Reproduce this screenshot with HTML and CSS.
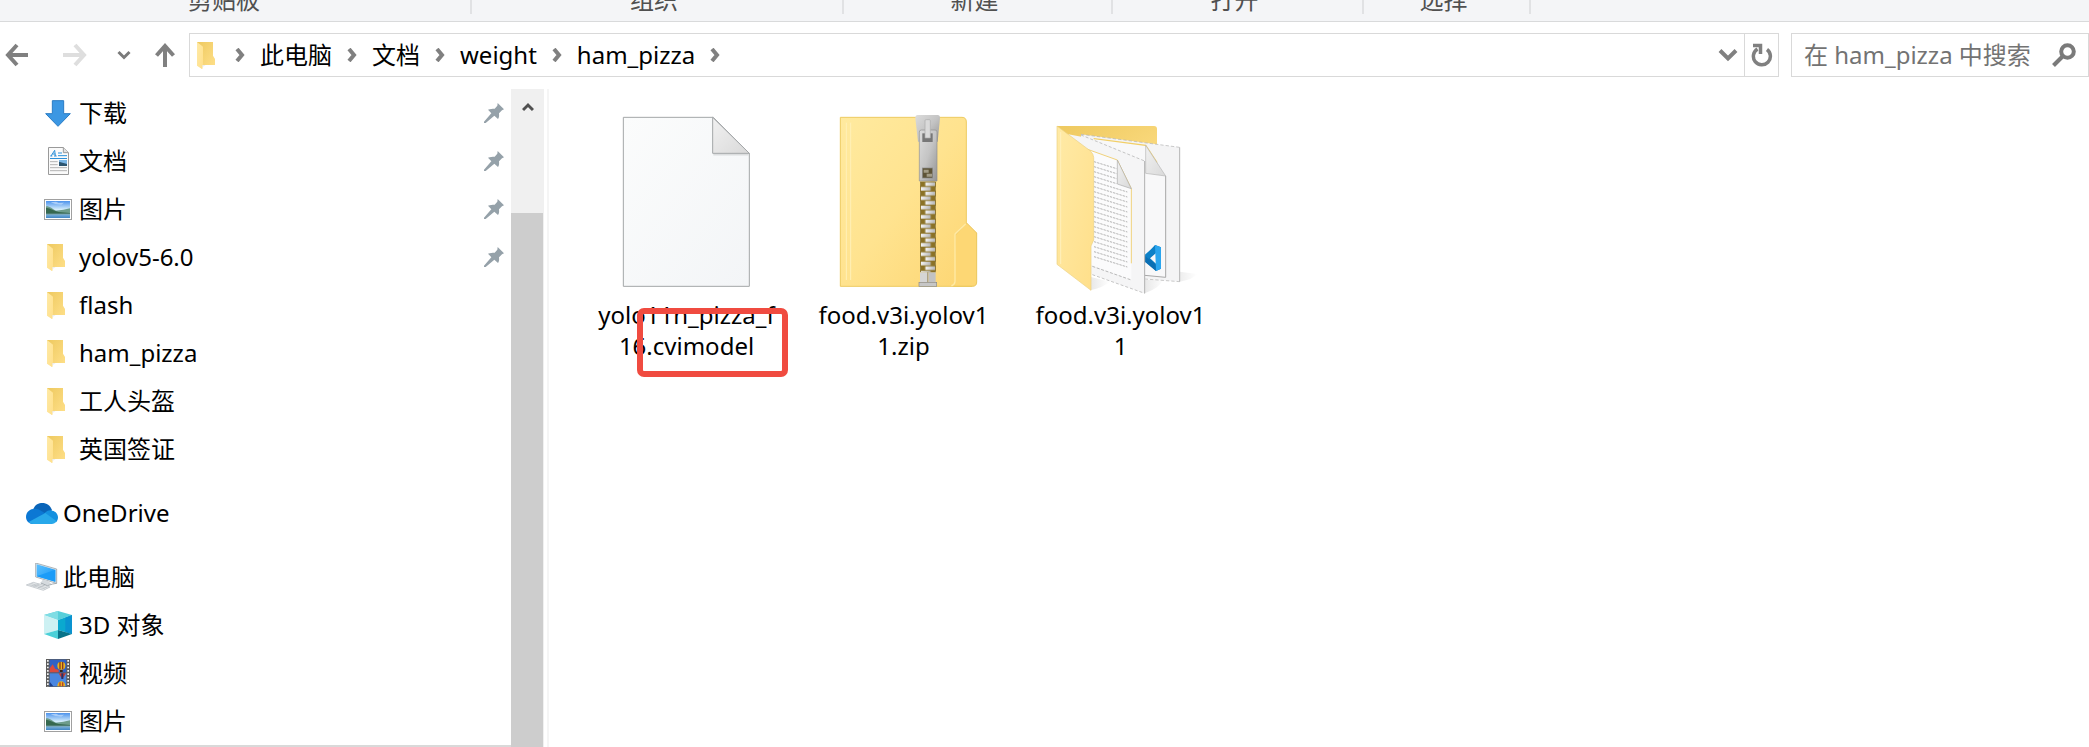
FILE: index.html
```html
<!DOCTYPE html>
<html lang="zh-CN">
<head>
<meta charset="utf-8">
<title>ham_pizza</title>
<link rel="stylesheet" href="styles.css">
</head>
<body>
<svg class="defs" aria-hidden="true">
  <defs>
    <linearGradient id="gFold" x1="0" y1="0" x2="1" y2="1"><stop offset="0" stop-color="#eec95f"/><stop offset="1" stop-color="#ffe08a"/></linearGradient>
    <linearGradient id="gFlap" x1="0" y1="0" x2="1" y2="1"><stop offset="0" stop-color="#ffeaa6"/><stop offset="1" stop-color="#ffdf8a"/></linearGradient>
    <linearGradient id="gSky" x1="0" y1="0" x2="0" y2="1"><stop offset="0" stop-color="#4d93ec"/><stop offset=".5" stop-color="#d3ecfb"/><stop offset="1" stop-color="#3f86c4"/></linearGradient>
    <linearGradient id="gZip" x1="0" y1="0" x2="1" y2="1"><stop offset="0" stop-color="#ffea9f"/><stop offset=".5" stop-color="#ffe38f"/><stop offset="1" stop-color="#fdd673"/></linearGradient>
    <linearGradient id="gMetal" x1="0" y1="0" x2="1" y2="1"><stop offset="0" stop-color="#dcdcdc"/><stop offset=".5" stop-color="#c4c4c4"/><stop offset="1" stop-color="#949494"/></linearGradient>
    <linearGradient id="gTooth" x1="0" y1="0" x2="1" y2="0"><stop offset="0" stop-color="#f6f6f6"/><stop offset="1" stop-color="#b5b5b5"/></linearGradient>
    <linearGradient id="gPaper" x1="0" y1="0" x2="1" y2="1"><stop offset="0" stop-color="#fbfcfc"/><stop offset="1" stop-color="#f3f5f7"/></linearGradient>
    <linearGradient id="gCurl" x1="0" y1="0" x2="1" y2="1"><stop offset="0" stop-color="#f1f1f1"/><stop offset="1" stop-color="#d9d9d9"/></linearGradient>
    <linearGradient id="gShade" x1="0" y1="0" x2="1" y2="0"><stop offset="0" stop-color="#c4c4c4"/><stop offset="1" stop-color="#ffffff"/></linearGradient>
    <linearGradient id="gScreen" x1="0" y1="0" x2="1" y2="1"><stop offset="0" stop-color="#5cc0ff"/><stop offset="1" stop-color="#1296f5"/></linearGradient>
    <pattern id="pTeeth" x="362" y="245" width="44" height="28" patternUnits="userSpaceOnUse">
      <rect width="44" height="28" fill="#8b7226"/>
      <rect x="14" y="2" width="30" height="11" fill="url(#gTooth)"/>
      <rect x="0" y="16" width="30" height="11" fill="url(#gTooth)"/>
    </pattern>
    <symbol id="folder" viewBox="0 0 57 81">
      <path d="M0 0H48V41L54 51V69H16V81L0 69Z" fill="url(#gFold)"/>
      <path d="M0 0 18 14V66L15 81 0 71Z" fill="url(#gFlap)"/>
      <path d="M16 75 26 70 16 70Z" fill="#e9e9e9"/>
    </symbol>
    <symbol id="pin" viewBox="0 0 60 60">
      <path d="M41 0 60 19 54 22 45 31C46 40 45 44 42 48L31 38 5 60H0V56L22 31 12 20C19 17 25 17 32 17L40 8Z" fill="#95a1a9"/>
    </symbol>
    <symbol id="chev" viewBox="0 0 10 14"><path d="M2 1 7 7 2 13" fill="none" stroke="#808080" stroke-width="4"/></symbol>
    <symbol id="picture" viewBox="0 0 84 63">
      <rect x="1.500" y="1.500" width="81" height="60" fill="#fff" stroke="#a0a0a0" stroke-width="3"/>
      <rect x="6" y="6" width="72" height="51" fill="url(#gSky)"/>
      <path d="M6 22C20 22 24 30 36 35L58 32 78 28V44H6Z" fill="#6d9c8b"/>
      <path d="M6 26C20 28 30 36 44 39L78 42V45L6 46Z" fill="#36684f"/>
      <path d="M20 10 36 8 44 12 60 11 52 17 34 15Z" fill="#a9cdf8"/>
      <path d="M6 44H78V47H6Z" fill="#7da8b6"/>
    </symbol>
  </defs>
</svg>

<header class="ribbon">
  <div class="group group-clip">剪贴板</div>
  <div class="group group-org">组织</div>
  <div class="group group-new">新建</div>
  <div class="group group-open">打开</div>
  <div class="group group-sel">选择</div>
</header>

<div class="toolbar">
  <div class="history">
    <button type="button" aria-label="返回"><svg width="24" height="26" viewBox="0 0 24 26"><path d="M23 13H4M12 3 3 13 12 23" fill="none" stroke="#808080" stroke-width="4"/></svg></button>
    <button type="button" aria-label="前进" disabled><svg width="24" height="26" viewBox="0 0 24 26"><path d="M0 13H20M12 3 21 13 12 23" fill="none" stroke="#dedede" stroke-width="4"/></svg></button>
    <button type="button" aria-label="最近浏览的位置"><svg width="14" height="10" viewBox="0 0 14 10"><path d="M1.500 2 7 7.500 12.500 2" fill="none" stroke="#7a7a7a" stroke-width="3"/></svg></button>
    <button type="button" aria-label="上移"><svg width="20" height="24" viewBox="0 0 20 24"><path d="M10 24V4M1.500 12.500 10 3 18.500 12.500" fill="none" stroke="#808080" stroke-width="4"/></svg></button>
  </div>
  <div class="address">
    <nav class="crumbs" aria-label="地址">
      <svg class="crumb-folder" width="19" height="27"><use href="#folder"/></svg>
      <svg width="10" height="14"><use href="#chev"/></svg>
      <a href="#pc">此电脑</a>
      <svg width="10" height="14"><use href="#chev"/></svg>
      <a href="#docs">文档</a>
      <svg width="10" height="14"><use href="#chev"/></svg>
      <a href="#weight">weight</a>
      <svg width="10" height="14"><use href="#chev"/></svg>
      <a href="#ham">ham_pizza</a>
      <svg width="10" height="14"><use href="#chev"/></svg>
    </nav>
    <button type="button" class="drop" aria-label="以前的位置"><svg width="20" height="14" viewBox="0 0 20 14"><path d="M2 2.500 10 10.500 18 2.500" fill="none" stroke="#808080" stroke-width="4"/></svg></button>
    <button type="button" class="refresh" aria-label="刷新"><svg width="22" height="24" viewBox="0 0 22 24"><path d="M16 6.500A8.500 8.500 0 1 1 6.500 6" fill="none" stroke="#808080" stroke-width="3.500"/><path d="M2 2.500H9.500V11" fill="none" stroke="#808080" stroke-width="3.500"/></svg></button>
  </div>
  <form class="search">
    <input type="text" aria-label="搜索" placeholder="在 ham_pizza 中搜索">
    <button type="button" aria-label="开始搜索"><svg width="24" height="24" viewBox="0 0 24 24"><circle cx="15.500" cy="8.500" r="6.300" fill="none" stroke="#7a7a7a" stroke-width="4"/><path d="M11 13 1.500 22.500" stroke="#7a7a7a" stroke-width="4"/></svg></button>
  </form>
</div>

<main class="content">
  <nav class="tree" aria-label="导航窗格">
    <a href="#1" class="item"><span class="ico"><svg width="26" height="27" viewBox="0 0 78 81"><path d="M22 2H56V41H76L39 79 2 41H22Z" fill="#3b97e3" stroke="#2a7cc4" stroke-width="3"/></svg></span><span class="label">下载</span><svg class="pin" width="20" height="20"><use href="#pin"/></svg></a>
    <a href="#2" class="item"><span class="ico"><svg width="21" height="28" viewBox="0 0 63 84"><path d="M1.500 1.500H46L61.500 17V82.500H1.500Z" fill="#fafafa" stroke="#9a9a9a" stroke-width="3"/><path d="M46 1.500V17H61" fill="#e2e2e2" stroke="#9a9a9a" stroke-width="3"/><path d="M9 27 20 10 22 27M13 21H22M7 27H13M18 27H26M30 18H42M30 26H57" fill="none" stroke="#2b90d9" stroke-width="3"/><path d="M6 34.500H57" stroke="#2b90d9" stroke-width="3"/><path d="M6 44H29M6 53H29M6 62H57M6 71H57" stroke="#b4b4b4" stroke-width="3"/><rect x="33" y="39" width="24" height="18" fill="#7ab6e6"/><path d="M33 44 57 51V57H33Z" fill="#2c5570"/></svg></span><span class="label">文档</span><svg class="pin" width="20" height="20"><use href="#pin"/></svg></a>
    <a href="#3" class="item"><span class="ico"><svg width="28" height="21"><use href="#picture"/></svg></span><span class="label">图片</span><svg class="pin" width="20" height="20"><use href="#pin"/></svg></a>
    <a href="#4" class="item"><span class="ico ico-folder"><svg width="19" height="27"><use href="#folder"/></svg></span><span class="label">yolov5-6.0</span><svg class="pin" width="20" height="20"><use href="#pin"/></svg></a>
    <a href="#5" class="item"><span class="ico ico-folder"><svg width="19" height="27"><use href="#folder"/></svg></span><span class="label">flash</span></a>
    <a href="#6" class="item"><span class="ico ico-folder"><svg width="19" height="27"><use href="#folder"/></svg></span><span class="label">ham_pizza</span></a>
    <a href="#7" class="item"><span class="ico ico-folder"><svg width="19" height="27"><use href="#folder"/></svg></span><span class="label">工人头盔</span></a>
    <a href="#8" class="item"><span class="ico ico-folder"><svg width="19" height="27"><use href="#folder"/></svg></span><span class="label">英国签证</span></a>
    <a href="#9" class="item root"><span class="ico"><svg width="32" height="21" viewBox="0 0 96 63"><path d="M22 18C28 4 38 0 49 0C62 0 74 8 78 22L52 42Z" fill="#0a64b8"/><path d="M19 63C8 62 0 53 0 42C0 26 13 17 26 17C36 17 42 21 58 31L40 56Z" fill="#0c78d4"/><path d="M56 30C66 20 74 21 79 23C90 25 96 34 96 43C96 49 94 54 90 58L50 48Z" fill="#1490df"/><path d="M8 57 58 30 92 55C88 60 83 63 77 63H21C16 63 11 61 8 57Z" fill="#28a8ea"/></svg></span><span class="label">OneDrive</span></a>
    <a href="#10" class="item root"><span class="ico"><svg width="32" height="28" viewBox="0 0 96 84"><path d="M29 0 92 18V61L29 42Z" fill="#e6eaed" stroke="#8a949b" stroke-width="2"/><path d="M32 4 88 20V56L32 40Z" fill="url(#gScreen)"/><path d="M32 40 88 20V56Z" fill="#1b9cf8"/><path d="M50 50 66 54 76 62 64 68 44 60Z" fill="#d5dade"/><path d="M44 60 64 68 80 63 92 61" fill="none" stroke="#a3abb0" stroke-width="3"/><path d="M1 66 22 58 72 72 52 82Z" fill="#e9eced" stroke="#b3babf" stroke-width="2"/><path d="M10 65 58 78M16 62 64 75M22 70 40 63M36 74 54 67" stroke="#b3babf" stroke-width="2"/></svg></span><span class="label">此电脑</span></a>
    <a href="#11" class="item"><span class="ico"><svg width="28" height="28" viewBox="0 0 84 84"><path d="M0 12 42 0 84 12 42 27Z" fill="#57cfda"/><path d="M0 12 42 0V27Z" fill="#7fdde4"/><path d="M0 12 42 27V57L0 69Z" fill="#cdf1f3"/><path d="M84 12 42 27V57L84 69Z" fill="#0aa9cf"/><path d="M84 12 64 20V63L84 69Z" fill="#0a93d0"/><path d="M0 69 42 57V84Z" fill="#4bd0d8"/><path d="M84 69 42 57V84Z" fill="#087389"/></svg></span><span class="label">3D 对象</span></a>
    <a href="#12" class="item"><span class="ico"><svg width="24" height="28" viewBox="0 0 72 84"><rect width="72" height="84" fill="#5c5c5c"/><rect x="11" y="2" width="50" height="38" fill="#2f62c6"/><rect x="11" y="43" width="50" height="39" fill="#4a86e0"/><path d="M5.500 3V84M66.500 3V84" stroke="#f4f4f4" stroke-width="5" stroke-dasharray="5 5"/><path d="M11 28 20 16 28 30 38 32V40H11Z" fill="#d94b3f"/><ellipse cx="46" cy="20" rx="12" ry="12" fill="#e8b320"/><path d="M42 9V31M50 9V31" stroke="#8d3a1a" stroke-width="4"/><path d="M42 33H50V39H42Z" fill="#3b2412"/><path d="M38 43H60L52 56H46Z" fill="#c63b2e"/><path d="M46 43H52V60H46Z" fill="#26316b"/><path d="M34 82C34 62 58 62 58 82Z" fill="#e8b320"/><path d="M42 70V82M50 70V82" stroke="#b8402a" stroke-width="4"/><path d="M11 68 22 82H11Z" fill="#1c3f8c"/></svg></span><span class="label">视频</span></a>
    <a href="#13" class="item"><span class="ico"><svg width="28" height="21"><use href="#picture"/></svg></span><span class="label">图片</span></a>
  </nav>
  <div class="scroll">
    <button type="button" aria-label="向上滚动"><svg width="12" height="10" viewBox="0 0 12 10"><path d="M1 8 6 3 11 8" fill="none" stroke="#505050" stroke-width="3"/></svg></button>
    <div class="thumb"></div>
  </div>
  <section class="files">
    <figure class="file">
      <svg width="217" height="199" viewBox="-6 0 651 597">
        <path d="M130 52H400L508 160V559H130Z" fill="url(#gPaper)" stroke="#a3a6a8" stroke-width="3"/>
        <path d="M400 164H506" stroke="#dcdedf" stroke-width="5"/>
        <path d="M398 52V160H508Z" fill="url(#gCurl)" stroke="#a3a6a8" stroke-width="3"/>
      </svg>
      <figcaption>yolo11n_pizza_f16.cvimodel</figcaption>
      <span class="mark"></span>
    </figure>
    <figure class="file">
      <svg width="217" height="199" viewBox="-15 0 651 597">
        <path d="M466 405 500 369 530 399V546Q530 559 517 559H460Z" fill="#fdd774" stroke="#eac65c" stroke-width="3"/>
        <path d="M121 52H486Q499 52 499 66V370L466 400V545Q466 559 452 559H121Z" fill="url(#gZip)"/>
        <path d="M499 369V66Q499 52 486 52H121V559H517" fill="none" stroke="#edcb61" stroke-width="3"/>
        <path d="M139 68V540M152 68V540" stroke="#fff0b8" stroke-width="3"/>
        <path d="M497 372 465 402V545Q464 555 454 557" fill="none" stroke="#ffeaa5" stroke-width="4"/>
        <rect x="360" y="245" width="48" height="272" fill="#8b7226"/>
        <rect x="362" y="245" width="44" height="272" fill="url(#pTeeth)"/>
        <path d="M353 45H413Q420 45 420 54L413 125H354L346 54Q346 45 353 45Z" fill="url(#gMetal)"/>
        <path d="M358 96Q358 90 364 90H405Q411 90 411 96V243H358Z" fill="url(#gMetal)" stroke="#8f8f8f" stroke-width="2"/>
        <rect x="367" y="100" width="31" height="26" fill="#777"/>
        <path d="M375 62Q375 59 379 59H388Q391 59 391 62V114H375Z" fill="#dadada" stroke="#aaa" stroke-width="2"/>
        <rect x="367" y="204" width="31" height="30" fill="#5e5437" stroke="#8a8a8a" stroke-width="2"/>
        <path d="M371 209H386V218H371ZM380 221H396V230H380Z" fill="#a39c86"/>
        <rect x="360" y="517" width="22" height="30" fill="#d5d5d5"/><rect x="385" y="517" width="22" height="30" fill="#c2c2c2"/>
        <path d="M383 517V547" stroke="#777" stroke-width="2"/>
        <rect x="357" y="547" width="53" height="12" fill="#c6c6c6" stroke="#8a8a8a" stroke-width="2"/>
      </svg>
      <figcaption>food.v3i.yolov11.zip</figcaption>
    </figure>
    <figure class="file">
      <svg width="217" height="199" viewBox="-24 0 651 597">
        <path d="M479 545V515L532 522Q520 538 479 545Z" fill="url(#gShade)" opacity=".3"/>
        <path d="M374 580V540L432 535Q420 565 374 580Z" fill="url(#gShade)" opacity=".4"/>
        <path d="M210 571V530L270 545Q250 562 210 571Z" fill="url(#gShade)" opacity=".4"/>
        <path d="M111 78H402Q411 78 411 87V250H111Z" fill="url(#gFold)"/>
        <path d="M183 103 479 142V545L183 520Z" fill="#f4f4f5"/>
        <path d="M479 142V545" stroke="#b5b5b5" stroke-width="3"/>
        <path d="M183 103 479 142M374 537 479 545" fill="none" stroke="#b0b0b0" stroke-width="2" stroke-dasharray="10 6"/>
        <path d="M223 116 377 136 437 228V532L223 510Z" fill="#f8f8f9"/>
        <path d="M437 228V532L374 526" fill="none" stroke="#a8a8a8" stroke-width="3"/>
        <path d="M223 130V116L377 136 411 188" fill="none" stroke="#f2cf67" stroke-width="4"/>
        <path d="M377 136V220L437 228Z" fill="url(#gCurl)" stroke="#b5b5b5" stroke-width="2"/>
        <path d="M405 435 423 442V506L408 513 368 478 374 470Z" fill="#0a78be"/><path d="M374 488 408 456V435L368 470Z" fill="#0d81c8"/><path d="M368 462 408 495V513L368 480Z" fill="#0a6fb4"/><path d="M408 459V491L390 475Z" fill="#f8f8f9"/><path d="M405 435 423 442V506L408 513Z" fill="#2aa5ee"/>
        <path d="M145 103 223 118 374 183V580L217 524 145 480Z" fill="#f5f5f6"/>
        <path d="M374 183V580" stroke="#b0b0b0" stroke-width="3"/>
        <path d="M183 105 374 183M217 524 374 580" stroke="#aaa" stroke-width="2" stroke-dasharray="9 6"/>
        <path d="M200 147 292 180 334 266V540L200 490Z" fill="#fbfbfc"/>
        <path d="M200 147 292 180 334 266V490" fill="none" stroke="#f0d27c" stroke-width="3"/>
        <path d="M217 499 334 540" stroke="#999" stroke-width="2" stroke-dasharray="9 5"/>
        <path d="M292 180V252L334 266Z" fill="url(#gCurl)" stroke="#aaa" stroke-width="2"/>
        <path d="M222 185 290 206M222 200 290 221M222 215 290 236M222 230 290 251M222 245 322 276M222 260 322 291M222 275 322 306M222 290 322 321M222 305 322 336M222 320 322 351M222 335 322 366M222 350 322 381M222 365 322 396M222 380 322 411M222 395 322 426M222 410 322 441M222 425 322 456M222 440 322 471M222 455 322 486M222 470 322 501" stroke="#b4b4b4" stroke-width="3" stroke-dasharray="7 3"/>
        <path d="M111 78 210 152Q221 162 221 172V420L213 438V571L111 493Z" fill="url(#gFlap)" stroke="#ecd081" stroke-width="2"/>
        <path d="M122 96V492" stroke="#fff0bd" stroke-width="3"/>
      </svg>
      <figcaption>food.v3i.yolov11</figcaption>
    </figure>
  </section>
</main>
</body>
</html>
```
FILE: styles.css
```css
* { box-sizing: border-box; }

body {
  margin: 0;
  height: 100vh;
  display: flex;
  flex-direction: column;
  overflow: hidden;
  background: #fff;
  color: #000;
  font: 24px/32px "Noto Sans", "Noto Sans CJK SC", sans-serif;
}

svg { display: block; flex: none; }
a { color: inherit; text-decoration: none; }

button {
  display: flex;
  align-items: center;
  justify-content: center;
  padding: 0;
  border: 0;
  background: none;
}

.defs { position: absolute; width: 0; height: 0; }

/* Ribbon footer */
.ribbon {
  display: flex;
  flex: none;
  height: 22px;
  background: #f4f5f7;
  border-bottom: 1px solid #d9dadb;
  overflow: hidden;
}

.group {
  display: flex;
  align-items: flex-end;
  justify-content: center;
  height: 14px;
  padding-right: 6px;
  border-right: 2px solid #e1e2e4;
  color: #505050;
  line-height: 28px;
}

.group-clip { width: 472px; padding-right: 22px; }
.group-org { width: 372px; }
.group-new { width: 269px; }
.group-open { width: 251px; }
.group-sel { width: 167px; }

/* Address row */
.toolbar {
  display: flex;
  flex: none;
  align-items: center;
  padding: 11px 0 12px;
}

.history {
  display: flex;
  align-items: center;
  width: 189px;
  padding-left: 5px;
}

.history button { margin-right: 30px; }
.history button:first-child { margin-right: 34px; }
.history button:nth-child(3) { margin-right: 24px; }
.history button:last-child { margin-right: 0; }

.address {
  display: flex;
  flex: 1;
  height: 44px;
  margin-right: 12px;
  border: 1px solid #d9d9d9;
}

.crumbs {
  display: flex;
  flex: 1;
  align-items: center;
  gap: 15px;
  padding-left: 7px;
}

.crumb-folder { margin-right: 4px; }
.drop { width: 32px; }
.refresh { width: 34px; border-left: 1px solid #d9d9d9; }

.search {
  display: flex;
  width: 298px;
  height: 44px;
  padding: 0 12px;
  border: 1px solid #d9d9d9;
}

.search input {
  flex: 1;
  min-width: 0;
  padding: 0;
  border: 0;
  outline: 0;
  background: none;
  font: inherit;
}

.search input::placeholder { color: #737373; opacity: 1; }

/* Panes */
.content {
  display: flex;
  flex: 1;
  min-height: 0;
}

.tree {
  width: 511px;
  border-bottom: 2px solid #d9d9d9;
  overflow: hidden;
}

.item {
  display: flex;
  align-items: center;
  height: 48px;
  padding: 0 7px 0 44px;
}

.item.root { margin-top: 16px; padding-left: 26px; }
.ico { display: flex; justify-content: center; width: 28px; margin-right: 7px; }
.ico-folder { justify-content: flex-start; padding-left: 3px; }
.root .ico { width: 32px; margin-right: 5px; }
.label { flex: 1; }

.scroll {
  display: flex;
  flex-direction: column;
  width: 33px;
  background: #f0f0f0;
}

.scroll button { height: 36px; margin-bottom: 88px; }
.thumb { flex: 1; margin-right: 1px; background: #cdcdcd; }

.files {
  display: flex;
  flex: 1;
  align-items: flex-start;
  margin-left: 3px;
  padding: 11px 0 0 29px;
  border-left: 2px solid #f5f5f5;
}

.file {
  position: relative;
  display: flex;
  flex-direction: column;
  align-items: center;
  width: 217px;
  margin: 0;
}

.file figcaption {
  width: 182px;
  line-height: 31px;
  text-align: center;
  word-break: break-all;
}

/* Highlight drawn over the file extension */
.mark {
  position: absolute;
  top: 208px;
  left: 59px;
  width: 151px;
  height: 69px;
  border: 6px solid #f04b40;
  border-radius: 7px;
}
```
